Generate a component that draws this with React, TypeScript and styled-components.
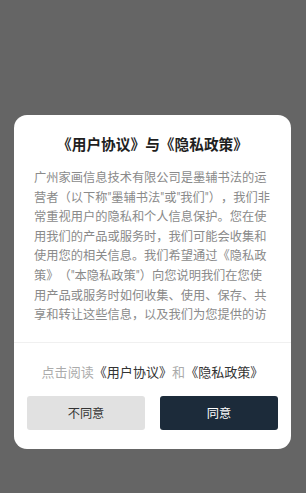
import React from "react";
import styled, { createGlobalStyle } from "styled-components";

const Global = createGlobalStyle`
  html, body { margin: 0; padding: 0; background: #656565; }
  body { font-family: "Noto Sans CJK SC", "Noto Sans", sans-serif; }
  * { box-sizing: border-box; }
`;

const Overlay = styled.div`
  width: 306px;
  height: 493px;
  background: #656565;
  padding: 115px 15px 0 14px;
  display: flex;
  flex-direction: column;
  align-items: stretch;
`;

const Card = styled.div`
  width: 277px;
  background: #ffffff;
  border-radius: 13px;
  display: flex;
  flex-direction: column;
  padding-bottom: 19px;
`;

const Title = styled.h1`
  margin: 18px 0 0;
  font-size: 14.7px;
  line-height: 22px;
  font-weight: 700;
  color: #1f1f1f;
  text-align: center;
`;

const Body = styled.div`
  margin: 14px 19px 0 20px;
  height: 157px;
  overflow: hidden;
  font-family: Roboto, "Noto Sans CJK SC", sans-serif;
  font-size: 12.24px;
  line-height: 19.6px;
  color: #8a8a8a;
  text-spacing-trim: space-all;
`;

const Divider = styled.div`
  height: 1px;
  background: #f0f0f0;
  margin-top: 16px;
`;

const Notice = styled.p`
  margin: 19px 0 0;
  font-size: 13.06px;
  line-height: 20px;
  color: #ababab;
  text-align: center;
  text-spacing-trim: space-all;
`;

const Link = styled.span`
  color: #333333;
`;

const Buttons = styled.div`
  display: grid;
  grid-template-columns: 1fr 1fr;
  gap: 15px;
  margin: 14px 13px 0;
`;

const Button = styled.button<{ $primary?: boolean }>`
  height: 34px;
  border: none;
  border-radius: 3px;
  font-family: inherit;
  font-size: 12.24px;
  background: ${(p) => (p.$primary ? "#1c2b3a" : "#e1e1e1")};
  color: ${(p) => (p.$primary ? "#ffffff" : "#333333")};
  padding: 0;
`;

const text =
  '广州家画信息技术有限公司是墨辅书法的运营者（以下称"墨辅书法"或"我们"），我们非常重视用户的隐私和个人信息保护。您在使用我们的产品或服务时，我们可能会收集和使用您的相关信息。我们希望通过《隐私政策》（"本隐私政策"）向您说明我们在您使用产品或服务时如何收集、使用、保存、共享和转让这些信息，以及我们为您提供的访问、更新、删除和保护这些信息的方式。';

export default function App() {
  return (
    <>
      <Global />
      <Overlay>
        <Card>
          <Title>《用户协议》与《隐私政策》</Title>
          <Body lang="zh-CN">{text}</Body>
          <Divider />
          <Notice>
            点击阅读<Link>《用户协议》</Link>和<Link>《隐私政策》</Link>
          </Notice>
          <Buttons>
            <Button>不同意</Button>
            <Button $primary>同意</Button>
          </Buttons>
        </Card>
      </Overlay>
    </>
  );
}
